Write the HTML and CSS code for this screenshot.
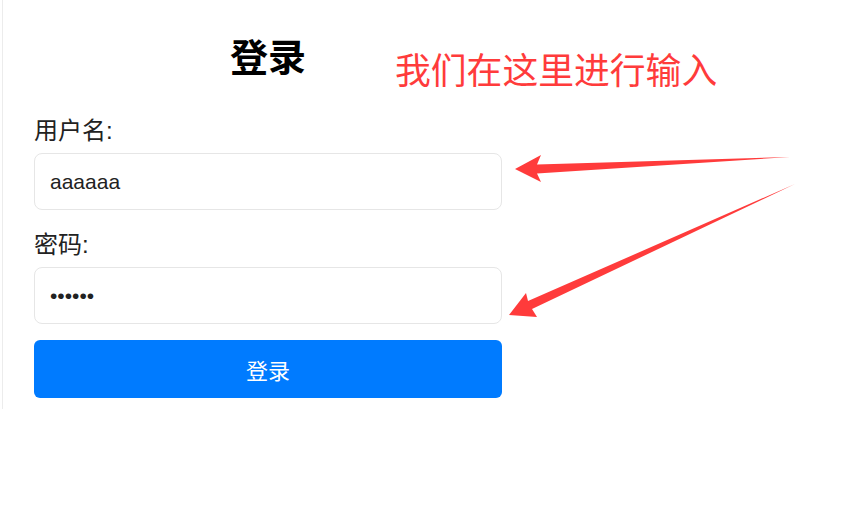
FILE: index.html
```html
<!DOCTYPE html>
<html lang="zh-CN">
  <head>
    <meta charset="UTF-8" />
    <meta name="viewport" content="width=device-width, initial-scale=1.0" />
    <title>登录</title>
    <link rel="stylesheet" href="styles.css">
  </head>
  <body>
    <div class="login-box">
      <h2>登录</h2>
      <form class="login-form">
        <label for="username">用户名:</label>
        <input type="text" id="username" value="aaaaaa" />
        <label for="password">密码:</label>
        <input type="password" id="password" value="123456" />
        <button type="submit">登录</button>
      </form>
    </div>

    <!-- annotation drawn over the screenshot -->
    <div class="note">
      <p class="note-text">我们在这里进行输入</p>
      <svg class="note-arrows" width="853" height="513" viewBox="0 0 853 513">
        <polygon points="515,169 541,155 537,164.5 790,157 537,173.5 541,182" fill="#ff3b3b" />
        <polygon points="509,315 526,293 528,301 795,184 532,309 537,317" fill="#ff3b3b" />
      </svg>
    </div>
  </body>
</html>
```

FILE: styles.css
```css
/* General Styling */
body {
  font-family: "Liberation Sans", "Noto Sans CJK SC", sans-serif;
  margin: 0;
  padding: 0;
  background-color: #fff;
  color: #222;
}

.login-box {
  width: 468px;
  margin-left: 2px;
  padding: 36px 32px 11px 31px;
  border-left: 1px solid #ececec;
}

.login-box h2 {
  margin: 0 0 36px;
  font-size: 38px;
  line-height: 44px;
  text-align: center;
  color: #000;
}

.login-form {
  display: flex;
  flex-direction: column;
}

.login-form label {
  font-size: 24px;
  line-height: 30px;
  margin-bottom: 7px;
}

.login-form label::after {
  content: "";
}

.login-form input {
  box-sizing: border-box;
  height: 57px;
  margin-bottom: 20px;
  padding: 0 15px;
  font-family: "Liberation Sans", sans-serif;
  font-size: 21px;
  color: #222;
  border: 1px solid #e6e6e6;
  border-radius: 8px;
  outline: none;
}

.login-form input[type="password"] {
  margin-bottom: 16px;
}

.login-form button {
  height: 58px;
  font-family: "Liberation Sans", "Noto Sans CJK SC", sans-serif;
  font-size: 22px;
  color: #fff;
  background-color: #007bff;
  border: none;
  border-radius: 6px;
  cursor: pointer;
}

.note {
  position: absolute;
  top: 0;
  left: 0;
  width: 853px;
  height: 513px;
  pointer-events: none;
}

.note-text {
  position: absolute;
  top: 47px;
  left: 395px;
  margin: 0;
  font-size: 35.8px;
  line-height: 50px;
  color: #ff3b3b;
  white-space: nowrap;
}

.note-arrows {
  position: absolute;
  top: 0;
  left: 0;
}
```
